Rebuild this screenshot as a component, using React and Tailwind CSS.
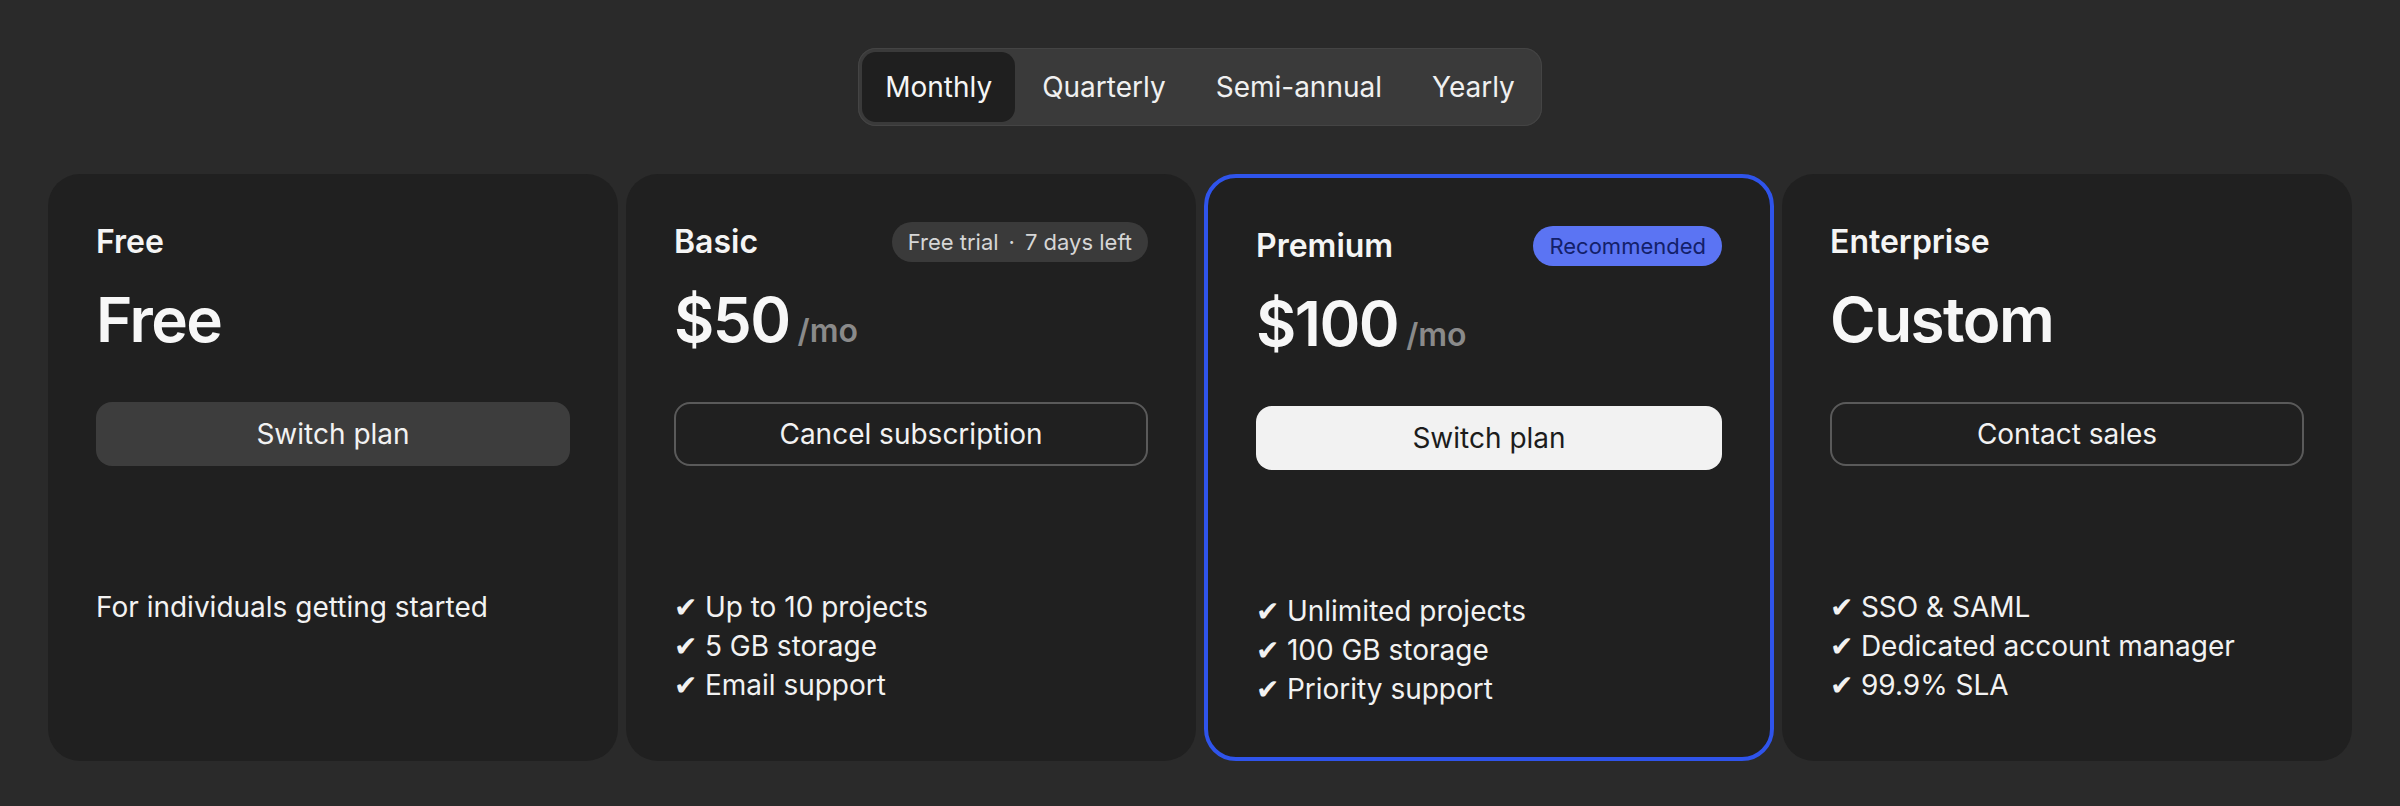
import React, { useState } from 'react';

const periods = ['Monthly', 'Quarterly', 'Semi-annual', 'Yearly'];

const plans = [
  {
    name: 'Free',
    price: 'Free',
    button: 'Switch plan',
    variant: 'muted',
    description: 'For individuals getting started',
  },
  {
    name: 'Basic',
    price: '$50',
    per: '/mo',
    badge: 'trial',
    button: 'Cancel subscription',
    variant: 'outline',
    features: ['Up to 10 projects', '5 GB storage', 'Email support'],
  },
  {
    name: 'Premium',
    price: '$100',
    per: '/mo',
    badge: 'recommended',
    button: 'Switch plan',
    variant: 'light',
    highlighted: true,
    features: ['Unlimited projects', '100 GB storage', 'Priority support'],
  },
  {
    name: 'Enterprise',
    price: 'Custom',
    button: 'Contact sales',
    variant: 'outline',
    features: ['SSO & SAML', 'Dedicated account manager', '99.9% SLA'],
  },
];

const buttonStyles = {
  muted: 'bg-[#3d3d3d] text-[#f2f2f2]',
  outline: 'border-2 border-[#5a5a5a] bg-transparent text-[#f2f2f2]',
  light: 'bg-[#f2f2f2] text-[#1c1c1c]',
};

function Badge({ type }) {
  if (type === 'trial') {
    return (
      <span className="flex h-10 items-center gap-2.5 rounded-full bg-[#3a3a3a] px-4 text-[22px] text-[#d6d6d6]">
        <span>Free trial</span>
        <span>·</span>
        <span>7 days left</span>
      </span>
    );
  }
  return (
    <span className="flex h-10 items-center rounded-full bg-[#5b74f3] px-4 text-[22px] text-[#13206a]">
      Recommended
    </span>
  );
}

function PlanCard({ plan }) {
  return (
    <div
      className={
        plan.highlighted
          ? 'flex flex-col rounded-[32px] border-4 border-[#2f54eb] bg-[#202020] p-12'
          : 'flex flex-col rounded-[32px] bg-[#202020] p-12'
      }
    >
      <div className="flex h-10 items-center justify-between">
        <h3 className="text-[32px] font-semibold leading-[40px] text-[#f5f5f5]">{plan.name}</h3>
        {plan.badge && <Badge type={plan.badge} />}
      </div>

      <div className="mt-[22px] flex items-baseline gap-2">
        <span className="text-[62px] font-semibold leading-[72px] tracking-tight text-[#f7f7f7]">{plan.price}</span>
        {plan.per && <span className="text-[32px] font-semibold leading-none text-[#8a8a8a]">{plan.per}</span>}
      </div>

      <button className={`mt-[46px] h-16 w-full rounded-2xl text-[28px] ${buttonStyles[plan.variant]}`}>
        {plan.button}
      </button>

      {plan.description ? (
        <p className="mt-[122px] text-[28px] leading-[39px] text-[#f2f2f2]">{plan.description}</p>
      ) : (
        <ul className="mt-[122px] text-[28px] leading-[39px] text-[#f2f2f2]">
          {plan.features.map((f) => (
            <li key={f}>✔&#xFE0E; {f}</li>
          ))}
        </ul>
      )}
    </div>
  );
}

export default function App() {
  const [period, setPeriod] = useState('Monthly');

  return (
    <div className="min-h-screen bg-[#2a2a2a] px-12 pt-12 font-['Inter',sans-serif]">
      <div className="flex justify-center">
        <div className="flex gap-1 rounded-[18px] bg-[#3a3a3a] p-1 shadow-[inset_0_0_0_1px_#444]">
          {periods.map((p) => (
            <button
              key={p}
              onClick={() => setPeriod(p)}
              className={
                p === period
                  ? 'h-[70px] rounded-[14px] bg-[#1f1f1f] px-[23px] text-[28px] text-[#f5f5f5]'
                  : 'h-[70px] rounded-[14px] px-[23px] text-[28px] text-[#f0f0f0]'
              }
            >
              {p}
            </button>
          ))}
        </div>
      </div>

      <div className="mt-12 grid grid-cols-4 gap-2">
        {plans.map((plan) => (
          <PlanCard key={plan.name} plan={plan} />
        ))}
      </div>
    </div>
  );
}
